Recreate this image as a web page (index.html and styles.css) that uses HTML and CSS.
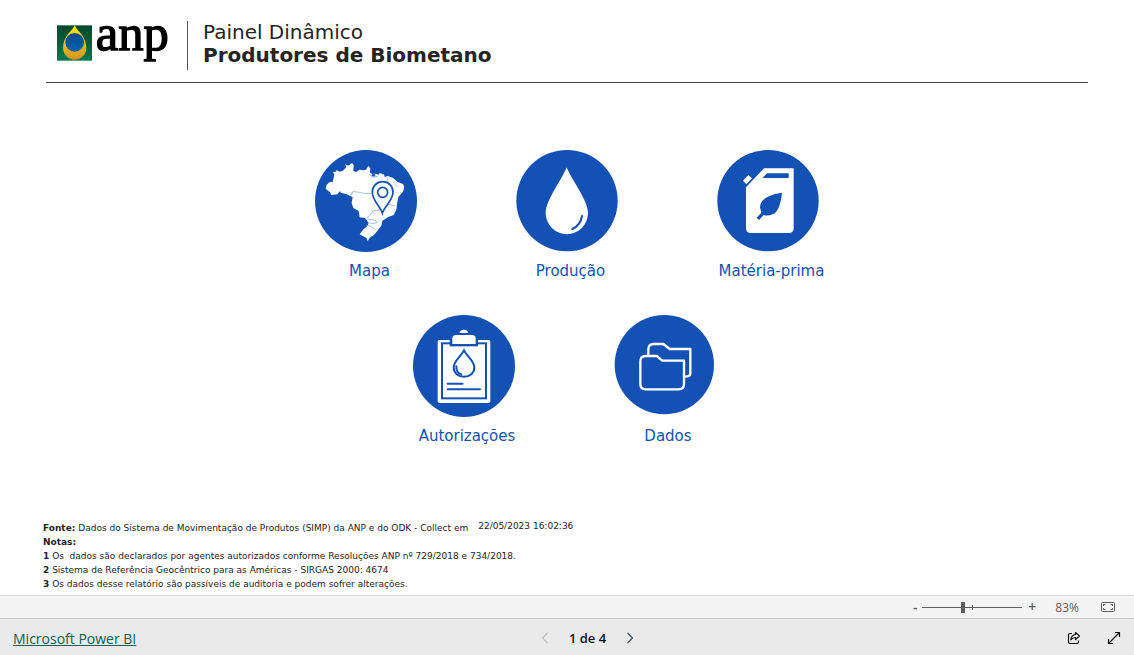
FILE: index.html
```html
<!DOCTYPE html>
<html lang="pt-BR">
<head>
<meta charset="utf-8">
<meta name="viewport" content="width=device-width, initial-scale=1">
<title>Painel Dinâmico - Produtores de Biometano</title>
<link rel="stylesheet" href="styles.css">
</head>
<body>
<header class="header">
  <svg class="logo" viewBox="51 -22 342 189" role="img" aria-label="anp">
    <defs>
      <linearGradient id="green" x1="0" y1="0" x2="0" y2="1"><stop offset="0" stop-color="#06472c"/><stop offset="1" stop-color="#007a50"/></linearGradient>
      <linearGradient id="gold" x1="0" y1="0" x2="0" y2="1"><stop offset="0" stop-color="#ffee10"/><stop offset="1" stop-color="#d9921f"/></linearGradient>
      <linearGradient id="blue" x1="0" y1="0" x2="0" y2="1"><stop offset="0" stop-color="#07458a"/><stop offset="1" stop-color="#0067b0"/></linearGradient>
    </defs>
    <rect x="51" y="45" width="105" height="106" fill="url(#green)"/>
    <path d="M104 45C98 62 69 76 69 113A35 35 0 0 0 139 113C139 76 110 62 104 45Z" fill="url(#gold)"/>
    <circle cx="104" cy="96" r="28" fill="url(#blue)"/>
    <text class="logo-text" x="167" y="118">anp</text>
  </svg>
  <h1 class="title"><span class="title-top">Painel Dinâmico</span><span class="title-main">Produtores de Biometano</span></h1>
</header>

<main class="main">
  <nav class="tiles" aria-label="Páginas">
    <div class="row">
      <a class="tile" href="#mapa">
        <svg class="icon" viewBox="26 25 306 306" aria-hidden="true">
          <circle class="disc" cx="179" cy="178" r="153"/>
          <path class="white" d="M58 141L61 129L69 122L79 120L84 99L80 91L89 90L91 85L99 90L110 87L120 77L117 68L126 72L137 64L142 70L141 88L150 91L159 84L172 86L179 84L186 73L192 80L191 93L199 97L195 103L204 105L207 96L217 99L220 94L233 99L235 106L244 103L259 108L274 121L290 127L294 136L290 150L276 166L273 181L270 204L262 220L246 226L228 237L225 252L212 269L202 281L191 287L184 299L181 290L160 278L170 264L183 253L187 245L181 235L175 229L160 227L157 208L141 199L136 184L139 166L130 162L120 157L103 153L101 148L93 158L75 160L70 151Z"/>
          <path class="state" d="M132 162L140 149L158 152L178 156L202 154M138 151L136 160M244 187L266 193M222 204L200 208L190 222L176 233M179 252L188 251L208 264M184 232L205 236L214 243M187 242L196 246L211 244M190 97L198 107L215 104M202 94L209 103M242 106L246 125M260 120L274 134"/>
          <path class="pin" d="M228 214C222 194 198 177 198 151A31 31 0 0 1 260 151C260 177 234 194 228 214Z"/>
          <circle class="pin" cx="229" cy="152" r="15"/>
        </svg>
        <span class="label">Mapa</span>
      </a>
      <a class="tile" href="#producao">
        <svg class="icon" viewBox="24 24 306 306" aria-hidden="true">
          <circle class="disc" cx="177" cy="176" r="152"/>
          <path class="white" d="M176 76C163 112 113 174 113 213A63.500 63.500 0 0 0 240 213C240 174 189 112 176 76Z"/>
          <path class="line" d="M222 222Q218 249 193 261"/>
        </svg>
        <span class="label">Produção</span>
      </a>
      <a class="tile" href="#materia-prima">
        <svg class="icon" viewBox="27 24 306 306" aria-hidden="true">
          <circle class="disc" cx="180" cy="176" r="152"/>
          <path class="white" fill-rule="evenodd" d="M168 79H257V259Q257 273 243 273H128Q114 273 114 259V136ZM177 94L163 108H242V94Z"/>
          <path class="white" d="M105 116L121 99L132 109L115 127Z"/>
          <path class="disc" d="M222 152Q158 160 156 196L160 212L146 227L153 234L167 219Q178 223 194 217Q216 208 222 152Z"/>
        </svg>
        <span class="label">Matéria-prima</span>
      </a>
    </div>
    <div class="row row-second">
      <a class="tile" href="#autorizacoes">
        <svg class="icon" viewBox="25 24 306 306" aria-hidden="true">
          <circle class="disc" cx="178" cy="177" r="153"/>
          <rect class="white" x="99" y="99" width="158" height="189" rx="5"/>
          <rect class="line" x="112" y="109" width="132" height="165"/>
          <path class="disc" d="M135 97H220V118H135Z"/>
          <path class="white" d="M143 111V94Q143 84 155 84H201Q213 84 213 94V111Z"/>
          <path class="white" d="M164 78Q167 68 178 68Q188 68 191 78Z"/>
          <path class="line" d="M178 130C169 148 147 163 147 181C147 199 161 209 178 209C195 209 209 199 209 181C209 163 187 148 178 130ZM155 178Q154 197 170 202M129 230H174M129 247H226"/>
        </svg>
        <span class="label">Autorizações</span>
      </a>
      <a class="tile" href="#dados">
        <svg class="icon" viewBox="28 24 306 306" aria-hidden="true">
          <circle class="disc" cx="179" cy="173" r="149"/>
          <path class="folder" d="M131 145V127Q131 111 147 111H176L195 126H257V199Q257 209 241 209"/>
          <path class="folder" d="M107 163Q107 147 123 147H156L173 161H238V231Q238 247 222 247H123Q107 247 107 231Z"/>
        </svg>
        <span class="label">Dados</span>
      </a>
    </div>
  </nav>

  <section class="notes">
    <div class="source"><p><b>Fonte:</b> Dados do Sistema de Movimentação de Produtos (SIMP) da ANP e do ODK - Collect em</p><time class="stamp" datetime="2023-05-22T16:02:36">22/05/2023 16:02:36</time></div>
    <p><b>Notas:</b></p>
    <p><b>1</b> Os&nbsp; dados são declarados por agentes autorizados conforme Resoluções ANP nº 729/2018 e 734/2018.</p>
    <p><b>2</b> Sistema de Referência Geocêntrico para as Américas - SIRGAS 2000: 4674</p>
    <p><b>3</b> Os dados desse relatório são passíveis de auditoria e podem sofrer alterações.</p>
  </section>
</main>

<div class="zoombar">
  <button class="zoom-btn" type="button" aria-label="Reduzir">-</button>
  <input class="slider" type="range" min="0" max="100" value="40" aria-label="Zoom">
  <button class="zoom-btn" type="button" aria-label="Ampliar">+</button>
  <span class="percent">83%</span>
  <button class="icon-btn" type="button" aria-label="Ajustar à página">
    <svg width="14" height="10" viewBox="0 0 14 10" fill="none" stroke="#605e5c"><rect x=".5" y=".5" width="13" height="9" rx="1"/><path d="M2.500 4V2.500H4.500M9.500 2.500H11.500V4M11.500 6V7.500H9.500M4.500 7.500H2.500V6"/></svg>
  </button>
</div>

<footer class="footer">
  <a class="brand" href="#powerbi">Microsoft Power BI</a>
  <div class="pager">
    <button class="icon-btn" type="button" aria-label="Página anterior" disabled><svg width="8" height="12" viewBox="0 0 8 12" fill="none" stroke="#bdbdbd" stroke-width="1.200"><path d="M6.500 1L1.500 6L6.500 11"/></svg></button>
    <span class="page-no">1 de 4</span>
    <button class="icon-btn" type="button" aria-label="Próxima página"><svg width="8" height="12" viewBox="0 0 8 12" fill="none" stroke="#33475b" stroke-width="1.200"><path d="M1.500 1L6.500 6L1.500 11"/></svg></button>
  </div>
  <div class="actions">
    <button class="icon-btn" type="button" aria-label="Compartilhar"><svg width="14" height="14" viewBox="0 0 14 14" fill="none" stroke="#111" stroke-width="1.200" stroke-linejoin="round"><path d="M5 2.500H3Q1.500 2.500 1.500 4V11Q1.500 12.500 3 12.500H10Q11.500 12.500 11.500 11V9.500M8.500 1.500L12.500 5L8.500 8.500V6.500Q5.500 6.500 3.800 8.800Q4.300 4 8.500 3.500Z"/></svg></button>
    <button class="icon-btn" type="button" aria-label="Tela inteira"><svg width="14" height="14" viewBox="0 0 14 14" fill="none" stroke="#111" stroke-width="1.200"><path d="M1.500 12.500L12.500 1.500M8 1.500H12.500V6M1.500 8V12.500H6"/></svg></button>
  </div>
</footer>
</body>
</html>
```
FILE: styles.css
```css
* { box-sizing: border-box; }
body {
  margin: 0;
  min-height: 100vh;
  display: flex;
  flex-direction: column;
  background: #fff;
  color: #252423;
  font-family: Verdana, "DejaVu Sans", sans-serif;
}
p, h1 { margin: 0; }
button { padding: 0; border: 0; background: none; font: inherit; color: inherit; }

.header {
  display: flex;
  align-items: flex-end;
  margin: 0 46px;
  padding: 3px 0 12px 11px;
  border-bottom: 1px solid #444;
}
.logo { width: 114px; height: 63px; margin: 0 16px 4px 0; }
.logo-text { font-family: "Liberation Serif", serif; font-size: 152px; stroke: #000; stroke-width: 4; }
.title {
  display: flex;
  flex-direction: column;
  height: 49px;
  padding-left: 15px;
  border-left: 1px solid #555;
  font-size: 20px;
  line-height: 24px;
  font-weight: 400;
}
.title-top { line-height: 22px; }
.title-main { font-weight: 700; }

.main { flex: 1; display: flex; flex-direction: column; }
.tiles { padding-top: 67px; }
.row { display: flex; justify-content: center; }
.row-second { margin-top: 34px; padding-right: 6px; }
.tile {
  width: 201px;
  display: flex;
  flex-direction: column;
  align-items: center;
  gap: 9px;
  color: #1351b4;
  text-decoration: none;
}
.icon { width: 102px; height: 102px; }
.label { padding-left: 7px; font-size: 15px; line-height: 20px; }
.disc { fill: #1351b4; }
.white { fill: #fff; }
.state { fill: none; stroke: #7ba0dc; stroke-width: 2; }
.pin { fill: #fff; stroke: #1351b4; stroke-width: 5; }
.line { fill: none; stroke: #1351b4; stroke-width: 6; stroke-linecap: round; }
.folder { fill: #1351b4; stroke: #fff; stroke-width: 7; stroke-linejoin: round; }

.notes {
  margin-top: auto;
  padding: 0 43px 4px;
  font-size: 9px;
  line-height: 14px;
}
.source { display: flex; gap: 10px; }
.stamp { line-height: 10px; }

.zoombar {
  display: flex;
  align-items: center;
  justify-content: flex-end;
  height: 23px;
  padding-right: 19px;
  border-top: 1px solid #ddd;
  background: #f4f4f4;
  color: #605e5c;
  font-family: "Segoe UI", "Open Sans", sans-serif;
  font-size: 12px;
}
.zoom-btn { width: 10px; font-size: 14px; line-height: 20px; font-weight: 600; }
.slider {
  appearance: none;
  width: 100px;
  height: 11px;
  margin: 0 5px 0 2px;
  background:
    linear-gradient(#605e5c, #605e5c) 50px 50% / 1px 5px no-repeat,
    linear-gradient(#605e5c, #605e5c) 0 50% / 100% 1px no-repeat;
}
.slider::-webkit-slider-thumb { appearance: none; width: 4px; height: 11px; background: #605e5c; }
.percent { margin: 0 22px 0 18px; }
.icon-btn { display: flex; }

.footer {
  display: grid;
  grid-template-columns: 1fr auto 1fr;
  align-items: center;
  height: 37px;
  padding: 2px 13px 0;
  border-top: 1px solid #c8c8c8;
  background: #eaeaea;
  color: #111;
  font-family: "Segoe UI", "Open Sans", sans-serif;
  font-size: 14px;
}
.brand { justify-self: start; color: #0b6159; }
.pager { display: flex; align-items: center; gap: 20px; margin-left: 41px; }
.page-no { font-size: 13px; font-weight: 600; }
.actions { display: flex; justify-content: flex-end; gap: 26px; }
```
